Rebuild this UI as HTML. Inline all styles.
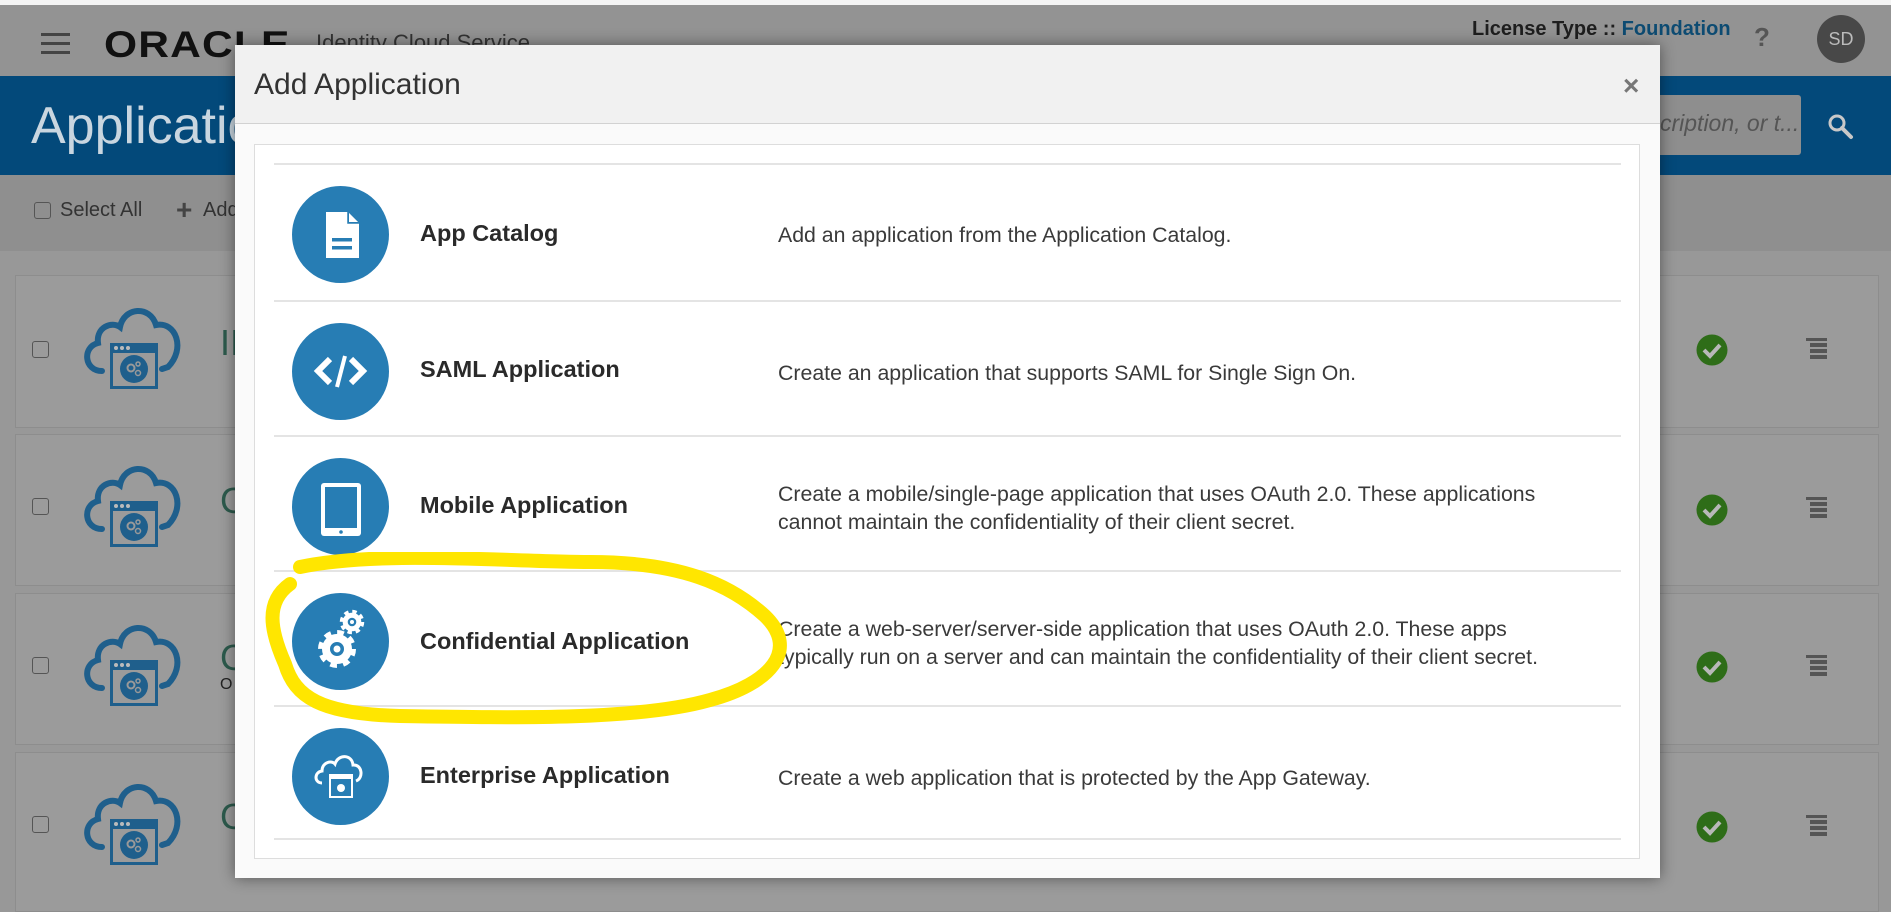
<!DOCTYPE html>
<html><head><meta charset="utf-8"><style>
*{margin:0;padding:0;box-sizing:border-box}
body{width:1891px;height:907px;overflow:hidden;position:relative;background:#989898;font-family:"Liberation Sans",sans-serif}
.a{position:absolute}
.card{position:absolute;left:15px;width:1864px;background:#9b9b9b;border:1px solid #8d8d8d}
.cb{position:absolute;width:17px;height:17px;border:1.5px solid #555;border-radius:3px}
.row{position:absolute;left:274px;width:1347px;height:135px;border-top:2px solid #e4e4e4}
.circ{position:absolute;left:18px;top:21px;width:97px;height:97px;border-radius:50%;background:#277db4}
.circ svg{position:absolute;left:0;top:0}
.tt{position:absolute;left:146px;font-weight:bold;font-size:23.5px;color:#2a2a2a}
.ds{position:absolute;left:504px;font-size:21.3px;color:#3a3a3a;line-height:28px;white-space:nowrap}
</style></head><body>
<svg width="0" height="0" style="position:absolute"><defs>
<symbol id="cloud" viewBox="0 0 106 86">
<path d="M22 68 C4 68 2 44 18 40 C16 24 32 18 40 24 C44 4 70 2 76 22 C96 18 106 46 88 64 L82 66" fill="none" stroke="#1f5f8c" stroke-width="6" stroke-linecap="round"/>
<rect x="30" y="40" width="48" height="46" fill="#1f5f8c"/>
<rect x="33" y="50" width="42" height="33" fill="#9b9b9b"/>
<circle cx="36" cy="45" r="2" fill="#bbb"/><circle cx="42" cy="45" r="2" fill="#bbb"/><circle cx="48" cy="45" r="2" fill="#bbb"/>
<circle cx="54" cy="66" r="14" fill="#1f5f8c"/>
<circle cx="51" cy="65" r="3.5" fill="none" stroke="#999" stroke-width="2"/><circle cx="58" cy="70" r="2.5" fill="none" stroke="#999" stroke-width="1.5"/><circle cx="58" cy="61" r="2" fill="none" stroke="#999" stroke-width="1.5"/>
</symbol>
</defs></svg>

<div class="a" style="left:0;top:0;width:1891px;height:5px;background:#f4f4f4"></div>
<div class="a" style="left:0;top:5px;width:1891px;height:71px;background:#939393"></div>
<div class="a" style="left:41px;top:33px;width:29px;height:3px;background:#444;box-shadow:0 9px 0 #444,0 18px 0 #444"></div>
<div class="a" style="left:104px;top:24px;font-size:37px;font-weight:bold;color:#111;letter-spacing:1px;transform:scaleX(1.15);transform-origin:left">ORACLE</div>
<div class="a" style="left:316px;top:30px;font-size:22px;color:#333">Identity Cloud Service</div>
<div class="a" style="left:1472px;top:18px;font-size:20px;font-weight:bold;color:#1e1e1e">License Type :: <span style="color:#0d4b72">Foundation</span></div>
<div class="a" style="left:1754px;top:22px;font-size:26px;font-weight:bold;color:#555">?</div>
<div class="a" style="left:1817px;top:15px;width:48px;height:48px;border-radius:50%;background:#484848;color:#bbb;font-size:18px;text-align:center;line-height:48px">SD</div>
<div class="a" style="left:0;top:76px;width:1891px;height:99px;background:#03497a"></div>
<div class="a" style="left:31px;top:96px;font-size:52px;color:#c9d6e0">Applications</div>
<div class="a" style="left:1600px;top:95px;width:201px;height:60px;background:#8e8e8e;border-radius:3px"></div>
<div class="a" style="left:1660px;top:110px;font-size:23px;font-style:italic;color:#555">cription, or t...</div>
<svg class="a" style="left:1826px;top:112px" width="30" height="30"><circle cx="11" cy="11" r="7" fill="none" stroke="#c8c8c8" stroke-width="3"/><path d="M16 16 L25 25" stroke="#c8c8c8" stroke-width="4" stroke-linecap="round"/></svg>
<div class="a" style="left:0;top:175px;width:1891px;height:76px;background:#8f8f8f"></div>
<div class="cb" style="left:34px;top:202px;background:transparent"></div>
<div class="a" style="left:60px;top:199px;font-size:20px;color:#333">Select All</div>
<div class="a" style="left:176px;top:194px;font-size:28px;font-weight:bold;color:#444">+</div>
<div class="a" style="left:203px;top:199px;font-size:20px;color:#333">Add</div>

<div class="card" style="top:275px;height:153px"></div>
<div class="card" style="top:434px;height:152px"></div>
<div class="card" style="top:593px;height:152px"></div>
<div class="card" style="top:752px;height:160px"></div>
<div class="cb" style="left:32px;top:341px"></div>
<div class="cb" style="left:32px;top:498px"></div>
<div class="cb" style="left:32px;top:657px"></div>
<div class="cb" style="left:32px;top:816px"></div>
<svg class="a" style="left:80px;top:303px" width="106" height="86"><use href="#cloud"/></svg>
<svg class="a" style="left:80px;top:461px" width="106" height="86"><use href="#cloud"/></svg>
<svg class="a" style="left:80px;top:620px" width="106" height="86"><use href="#cloud"/></svg>
<svg class="a" style="left:80px;top:779px" width="106" height="86"><use href="#cloud"/></svg>
<div class="a" style="left:220px;top:322px;font-size:36px;color:#2c5a4c">II</div>
<div class="a" style="left:220px;top:480px;font-size:36px;color:#2c5a4c">C</div>
<div class="a" style="left:220px;top:637px;font-size:36px;color:#2c5a4c">C</div>
<div class="a" style="left:220px;top:676px;font-size:16px;color:#222">O</div>
<div class="a" style="left:220px;top:796px;font-size:36px;color:#2c5a4c">C</div>
<svg class="a" style="left:1696px;top:334px" width="32" height="32"><circle cx="16" cy="16" r="15.5" fill="#2e6d18"/><path d="M8 16 L14 22 L24 11" fill="none" stroke="#b8b8b8" stroke-width="4"/></svg>
<svg class="a" style="left:1696px;top:494px" width="32" height="32"><circle cx="16" cy="16" r="15.5" fill="#2e6d18"/><path d="M8 16 L14 22 L24 11" fill="none" stroke="#b8b8b8" stroke-width="4"/></svg>
<svg class="a" style="left:1696px;top:651px" width="32" height="32"><circle cx="16" cy="16" r="15.5" fill="#2e6d18"/><path d="M8 16 L14 22 L24 11" fill="none" stroke="#b8b8b8" stroke-width="4"/></svg>
<svg class="a" style="left:1696px;top:811px" width="32" height="32"><circle cx="16" cy="16" r="15.5" fill="#2e6d18"/><path d="M8 16 L14 22 L24 11" fill="none" stroke="#b8b8b8" stroke-width="4"/></svg>
<svg class="a" style="left:1806px;top:338px" width="22" height="22"><path d="M0 1H21M4 7H21M4 13H21M4 19H21" stroke="#555" stroke-width="4"/></svg>
<svg class="a" style="left:1806px;top:497px" width="22" height="22"><path d="M0 1H21M4 7H21M4 13H21M4 19H21" stroke="#555" stroke-width="4"/></svg>
<svg class="a" style="left:1806px;top:655px" width="22" height="22"><path d="M0 1H21M4 7H21M4 13H21M4 19H21" stroke="#555" stroke-width="4"/></svg>
<svg class="a" style="left:1806px;top:815px" width="22" height="22"><path d="M0 1H21M4 7H21M4 13H21M4 19H21" stroke="#555" stroke-width="4"/></svg>

<div class="a" style="left:235px;top:45px;width:1425px;height:833px;background:#fafafa;box-shadow:0 0 14px rgba(0,0,0,.45)"></div>
<div class="a" style="left:235px;top:45px;width:1425px;height:79px;background:#f1f1f1;border-bottom:1px solid #d2d2d2"></div>
<div class="a" style="left:254px;top:68px;font-size:30px;color:#333">Add Application</div>
<div class="a" style="left:1623px;top:70px;font-size:28px;font-weight:bold;color:#777">×</div>
<div class="a" style="left:254px;top:144px;width:1386px;height:715px;background:#fff;border:1px solid #ddd"></div>

<div class="row" style="top:163px">
 <div class="circ"><svg width="97" height="97"><path d="M34 26 H56 L67 37 V72 H34 Z" fill="#fff"/><path d="M56 26 V37 H67" fill="#277db4" stroke="#277db4" stroke-width="1.5"/><path d="M57 27 V36 H66 Z" fill="#fff"/><rect x="40" y="52" width="20" height="3.5" fill="#277db4"/><rect x="40" y="60" width="20" height="3.5" fill="#277db4"/></svg></div>
 <div class="tt" style="top:55px">App Catalog</div>
 <div class="ds" style="top:56px">Add an application from the Application Catalog.</div>
</div>
<div class="row" style="top:300px">
 <div class="circ"><svg width="97" height="97"><path d="M38 36 L26 48 L38 60" fill="none" stroke="#fff" stroke-width="6"/><path d="M59 36 L71 48 L59 60" fill="none" stroke="#fff" stroke-width="6"/><path d="M53 33 L45 64" stroke="#fff" stroke-width="4"/></svg></div>
 <div class="tt" style="top:54px">SAML Application</div>
 <div class="ds" style="top:57px">Create an application that supports SAML for Single Sign On.</div>
</div>
<div class="row" style="top:435px">
 <div class="circ"><svg width="97" height="97"><rect x="29" y="25" width="40" height="53" rx="3" fill="#fff"/><rect x="33" y="29" width="32" height="41" fill="#277db4"/><circle cx="49" cy="74" r="1.8" fill="#277db4"/></svg></div>
 <div class="tt" style="top:55px">Mobile Application</div>
 <div class="ds" style="top:43px">Create a mobile/single-page application that uses OAuth 2.0. These applications<br>cannot maintain the confidentiality of their client secret.</div>
</div>
<div class="row" style="top:570px">
 <div class="circ"><svg width="97" height="97">
  <circle cx="45" cy="56" r="16" fill="none" stroke="#fff" stroke-width="6" stroke-dasharray="6.5 6.07"/>
  <circle cx="45" cy="56" r="11" fill="none" stroke="#fff" stroke-width="8"/>
  <circle cx="45" cy="56" r="3.5" fill="#fff"/>
  <circle cx="60" cy="29" r="10" fill="none" stroke="#fff" stroke-width="4.5" stroke-dasharray="4.2 3.65"/>
  <circle cx="60" cy="29" r="6.8" fill="none" stroke="#fff" stroke-width="5"/>
  <circle cx="60" cy="29" r="2" fill="#fff"/>
 </svg></div>
 <div class="tt" style="top:56px">Confidential Application</div>
 <div class="ds" style="top:43px">Create a web-server/server-side application that uses OAuth 2.0. These apps<br>typically run on a server and can maintain the confidentiality of their client secret.</div>
</div>
<div class="row" style="top:705px;border-bottom:2px solid #e4e4e4">
 <div class="circ"><svg width="97" height="97"><path d="M30 55 C22 55 22 44 30 43 C30 34 40 32 43 36 C46 26 60 26 61 37 C70 36 72 50 64 53" fill="none" stroke="#fff" stroke-width="3"/><rect x="37" y="46" width="24" height="24" fill="#fff"/><rect x="39" y="51" width="20" height="17" fill="#277db4"/><circle cx="49" cy="60" r="4" fill="#fff"/></svg></div>
 <div class="tt" style="top:55px">Enterprise Application</div>
 <div class="ds" style="top:57px">Create a web application that is protected by the App Gateway.</div>
</div>

<svg class="a" style="left:260px;top:552px" width="540" height="180"><path d="M40 15 C120 -2 250 10 330 10 C420 10 470 32 505 64 C540 98 510 132 450 148 C380 168 260 166 140 164 C60 162 35 145 25 112 C10 78 5 50 30 32" fill="none" stroke="#ffe600" stroke-width="14" stroke-linecap="round"/></svg>
</body></html>
